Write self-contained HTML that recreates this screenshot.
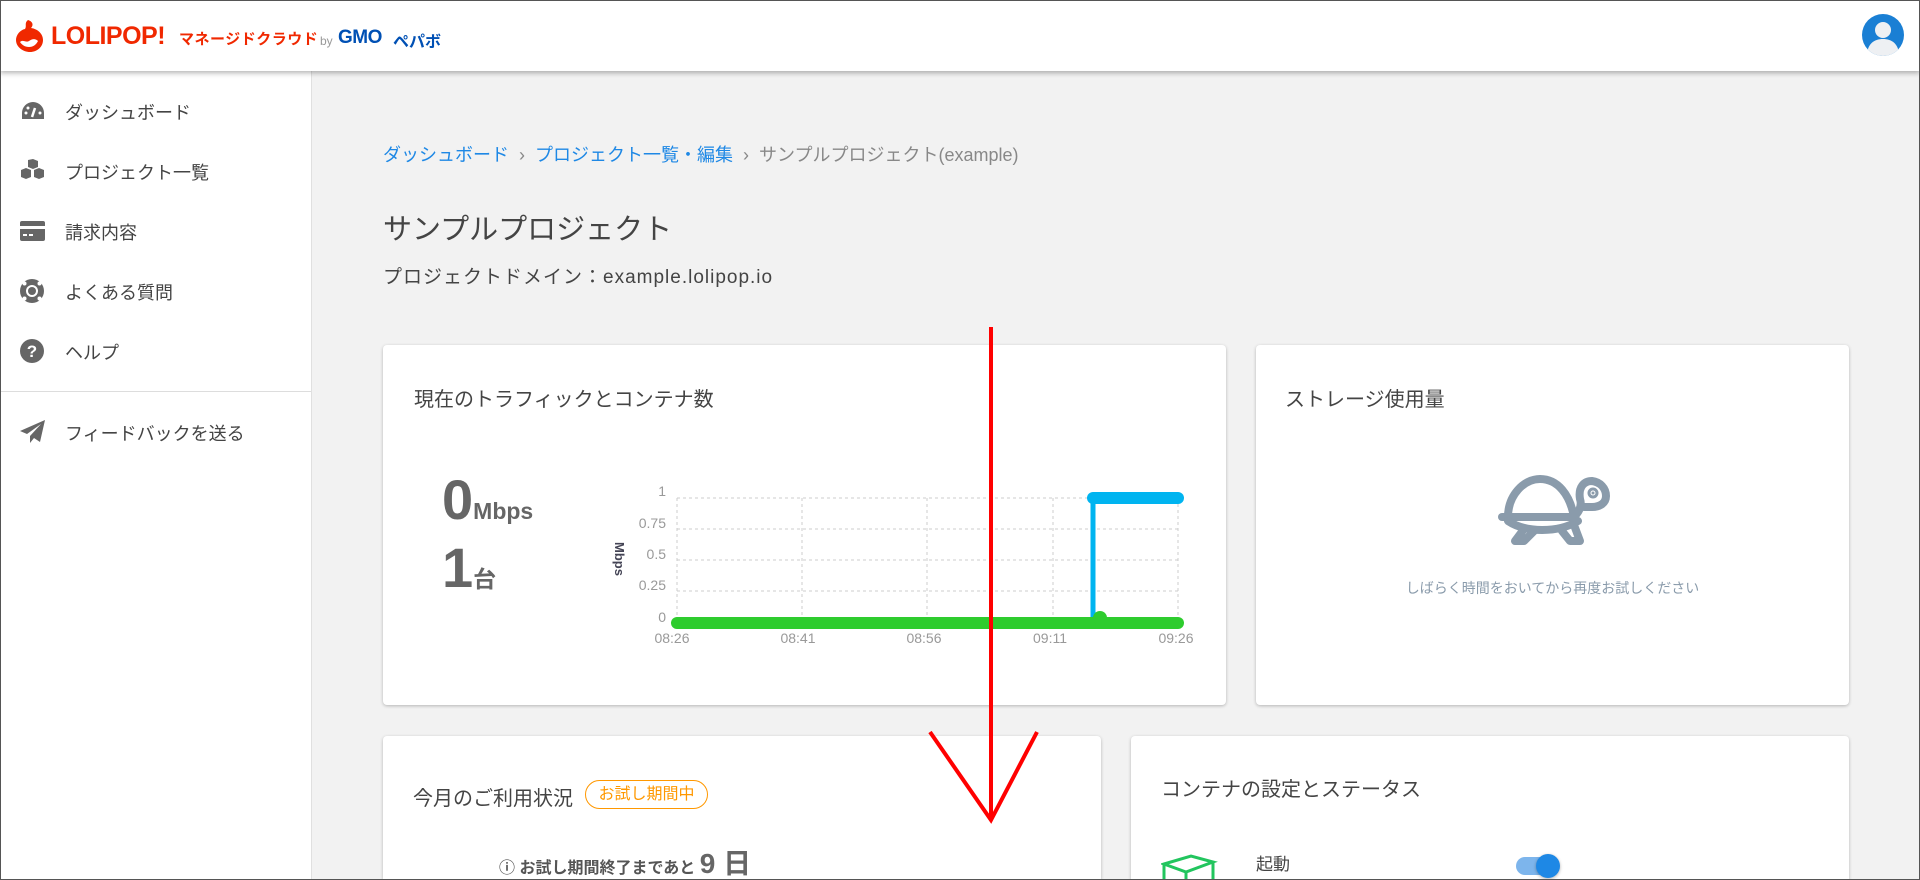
<!DOCTYPE html>
<html><head><meta charset="utf-8"><style>
*{margin:0;padding:0;box-sizing:border-box}
html{overflow:hidden;width:1920px;height:880px}
body{width:1920px;height:880px;overflow:hidden;background:#f2f2f2;font-family:"Liberation Sans","Noto Sans CJK JP",sans-serif;position:relative;color:#444}
.frame{position:absolute;left:0;top:0;width:1920px;height:880px;border:1px solid #555;z-index:50;pointer-events:none}
.hdr{position:absolute;left:0;top:0;width:1920px;height:71px;background:#fff;box-shadow:0 2px 5px rgba(0,0,0,.3);z-index:5}
.side{position:absolute;left:0;top:71px;width:312px;height:809px;background:#fff;border-right:1px solid #e0e0e0}
.item{position:absolute;left:0;height:40px;width:311px;font-size:18px;color:#444}
.item span{position:absolute;left:65px;top:8px}
.item svg{position:absolute;left:20px;top:8px}
.abs{position:absolute}
.card{position:absolute;background:#fff;border-radius:4px;box-shadow:0 1px 3px rgba(0,0,0,.25)}
.ct{position:absolute;font-size:20px;color:#444}
</style></head><body>
<div class="frame"></div>
<div class="hdr">
 <svg class="abs" style="left:14px;top:18px" width="32" height="36" viewBox="0 0 32 36"><path d="M14 2c6 2 5 6 3 8 7 1 12 6 12 12 0 7-6 12-13 12S2 29 2 22c0-5 4-10 9-11 2-3-1-6 3-9z" fill="#f02800"/><path d="M6 24c3-3 6 1 9-1s6-3 9 0c-2 4-5 6-9 6s-7-2-9-5z" fill="#fff"/></svg>
 <div class="abs" style="left:51px;top:22px;font-size:25px;font-weight:bold;color:#f02800;letter-spacing:-0.5px">LOLIPOP!</div>
 <div class="abs" style="left:179px;top:28px;font-size:15px;font-weight:bold;color:#f02800;letter-spacing:0.5px">マネージドクラウド</div>
 <div class="abs" style="left:320px;top:34px;font-size:12px;color:#999">by</div>
 <div class="abs" style="left:338px;top:27px;font-size:19px;font-weight:bold;color:#0050b4;letter-spacing:-0.5px">GMO</div>
 <div class="abs" style="left:393px;top:28px;font-size:16px;font-weight:bold;color:#0050b4">ペパボ</div>
 <svg class="abs" style="left:1862px;top:14px" width="42" height="42" viewBox="0 0 42 42"><defs><clipPath id="c"><circle cx="21" cy="21" r="21"/></clipPath></defs><circle cx="21" cy="21" r="21" fill="#1a7fd4"/><g clip-path="url(#c)" fill="#eef0f3"><circle cx="21" cy="16" r="8"/><path d="M5 42c0-12 7-17 16-17s16 5 16 17z"/></g></svg>
</div>
<div class="side">
 <div class="item" style="top:20px"><svg width="26" height="24" viewBox="0 0 26 24"><path d="M13 3A11 11 0 0 0 2 14v6h22v-6A11 11 0 0 0 13 3z" fill="#666"/><path d="M12 18l3-9" stroke="#fff" stroke-width="2.5"/><circle cx="6" cy="14" r="1.5" fill="#fff"/><circle cx="8" cy="9" r="1.5" fill="#fff"/><circle cx="20" cy="14" r="1.5" fill="#fff"/></svg><span>ダッシュボード</span></div>
 <div class="item" style="top:80px"><svg width="26" height="24" viewBox="0 0 26 24"><path d="M8 1l5-1 5 2v6l-5 2-5-2zM1 11l5-2 5 2v7l-5 2-5-2zM14 11l5-2 5 2v7l-5 2-5-2z" fill="#666"/></svg><span>プロジェクト一覧</span></div>
 <div class="item" style="top:140px"><svg width="26" height="24" viewBox="0 0 26 24"><rect x="0" y="2" width="25" height="20" rx="2" fill="#666"/><rect x="0" y="7" width="25" height="3" fill="#fff"/><rect x="3" y="15" width="4" height="2" fill="#fff"/><rect x="9" y="15" width="4" height="2" fill="#fff"/></svg><span>請求内容</span></div>
 <div class="item" style="top:200px"><svg width="26" height="26" viewBox="0 0 26 26"><circle cx="12" cy="12" r="12" fill="#666"/><circle cx="12" cy="12" r="6" fill="#fff"/><circle cx="12" cy="12" r="4" fill="#666"/><g fill="#fff"><circle cx="4.5" cy="4.5" r="2"/><circle cx="19.5" cy="4.5" r="2"/><circle cx="4.5" cy="19.5" r="2"/><circle cx="19.5" cy="19.5" r="2"/></g></svg><span>よくある質問</span></div>
 <div class="item" style="top:260px"><svg width="26" height="26" viewBox="0 0 26 26"><circle cx="12" cy="12" r="12" fill="#666"/><text x="12" y="18" font-size="17" font-weight="bold" fill="#fff" text-anchor="middle" font-family="Liberation Sans">?</text></svg><span>ヘルプ</span></div>
 <div class="abs" style="left:0;top:320px;width:311px;height:1px;background:#ddd"></div>
 <div class="item" style="top:341px"><svg width="26" height="24" viewBox="0 0 26 24"><path d="M25 0L0 11l7 3 14-10-11 12v7l4-5 6 4z" fill="#666"/></svg><span>フィードバックを送る</span></div>
</div>
<div class="abs" style="left:383px;top:141px;font-size:18px;color:#888"><span style="color:#1e88e5">ダッシュボード</span> &nbsp;›&nbsp; <span style="color:#1e88e5">プロジェクト一覧・編集</span> &nbsp;›&nbsp; サンプルプロジェクト(example)</div>
<div class="abs" style="left:383px;top:206px;font-size:29px;color:#444">サンプルプロジェクト</div>
<div class="abs" style="left:383px;top:262px;font-size:19px;color:#444;letter-spacing:1px">プロジェクトドメイン：example.lolipop.io</div>

<div class="card" style="left:383px;top:345px;width:843px;height:360px">
 <div class="ct" style="left:31px;top:38px">現在のトラフィックとコンテナ数</div>
 <div class="abs" style="left:59px;top:122px;color:#666;font-weight:bold"><span style="font-size:56px">0</span><span style="font-size:23px">Mbps</span></div>
 <div class="abs" style="left:59px;top:190px;color:#666;font-weight:bold"><span style="font-size:56px">1</span><span style="font-size:23px">台</span></div>
</div>
<svg class="abs" style="left:600px;top:470px" width="600" height="190" viewBox="600 470 600 190" font-family="Liberation Sans" font-size="14" fill="#999">
 <g stroke="#ccc" stroke-dasharray="3,3" fill="none"><path d="M677 498H1178M677 529H1178M677 560H1178M677 591H1178M677 622H1178M677 498V622M802 498V622M927 498V622M1053 498V622M1178 498V622"/></g>
 <text x="666" y="496" text-anchor="end">1</text><text x="666" y="528" text-anchor="end">0.75</text><text x="666" y="559" text-anchor="end">0.5</text><text x="666" y="590" text-anchor="end">0.25</text><text x="666" y="622" text-anchor="end">0</text>
 <text x="672" y="643" text-anchor="middle">08:26</text><text x="798" y="643" text-anchor="middle">08:41</text><text x="924" y="643" text-anchor="middle">08:56</text><text x="1050" y="643" text-anchor="middle">09:11</text><text x="1176" y="643" text-anchor="middle">09:26</text>
 <text transform="translate(615,542) rotate(90)" font-size="13" font-weight="bold" fill="#445">Mbps</text>
 <path d="M1093 622V498H1178" stroke="#00b4f0" stroke-width="5" fill="none"/>
 <path d="M1093 498H1178" stroke="#00b4f0" stroke-width="12" stroke-linecap="round"/>
 <path d="M677 623H1178" stroke="#2ecc2e" stroke-width="12" stroke-linecap="round"/>
 <circle cx="1100" cy="618" r="7" fill="#2ecc2e"/>
</svg>

<div class="card" style="left:1256px;top:345px;width:593px;height:360px">
 <div class="ct" style="left:29px;top:38px">ストレージ使用量</div>
 <svg class="abs" style="left:240px;top:126px" width="116" height="78" viewBox="0 0 116 78" fill="none" stroke="#8a9bab" stroke-width="8" stroke-linecap="round" stroke-linejoin="round">
  <path d="M6 46H78"/>
  <path d="M12 46C12 24 28 8 44 8C62 8 74 24 78 46"/>
  <path d="M78 46C84 40 86 34 84 28C82 16 88 10 96 10C104 11 110 17 110 25C110 32 104 36 96 36H88"/>
  <path d="M12 50C30 62 62 62 82 50"/>
  <path d="M28 58L19 70H28L38 60M66 60L74 70H84L78 54"/>
  <circle cx="97" cy="22" r="1.5" fill="#8a9bab"/>
 </svg>
 <div class="abs" style="left:0;width:593px;top:233px;text-align:center;font-size:14px;color:#8a9bab">しばらく時間をおいてから再度お試しください</div>
</div>

<div class="card" style="left:383px;top:736px;width:718px;height:144px;border-radius:4px 4px 0 0">
 <div class="ct" style="left:30px;top:46px">今月のご利用状況</div>
 <div class="abs" style="left:202px;top:44px;width:123px;height:29px;border:1px solid #ff9800;border-radius:15px;color:#ff9800;font-size:16px;text-align:center;line-height:27px">お試し期間中</div>
 <div class="abs" style="left:116px;top:106px;font-size:16px;color:#555;font-weight:bold">ⓘ お試し期間終了まであと <span style="font-size:28px;color:#666">9 日</span></div>
</div>
<div class="card" style="left:1131px;top:736px;width:718px;height:144px;border-radius:4px 4px 0 0">
 <div class="ct" style="left:30px;top:37px">コンテナの設定とステータス</div>
 <svg class="abs" style="left:30px;top:118px" width="70" height="40" viewBox="0 0 70 40" fill="none" stroke="#22c55e" stroke-width="3"><path d="M3 10L30 2 52 8 25 18zM3 10v30M25 18v22M52 8v30"/></svg>
 <div class="abs" style="left:125px;top:114px;font-size:17px;color:#444">起動</div>
 <div class="abs" style="left:385px;top:121px;width:36px;height:18px;border-radius:9px;background:#7db5ec"></div>
 <div class="abs" style="left:405px;top:118px;width:24px;height:24px;border-radius:12px;background:#1e88e5;box-shadow:0 1px 3px rgba(0,0,0,.3)"></div>
</div>

<svg class="abs" style="left:0;top:0;z-index:40" width="1920" height="880"><g stroke="#f00" stroke-width="4" fill="none"><path d="M991 327V820"/><path d="M930 732L991 820 1037 732"/></g></svg>
</body></html>
